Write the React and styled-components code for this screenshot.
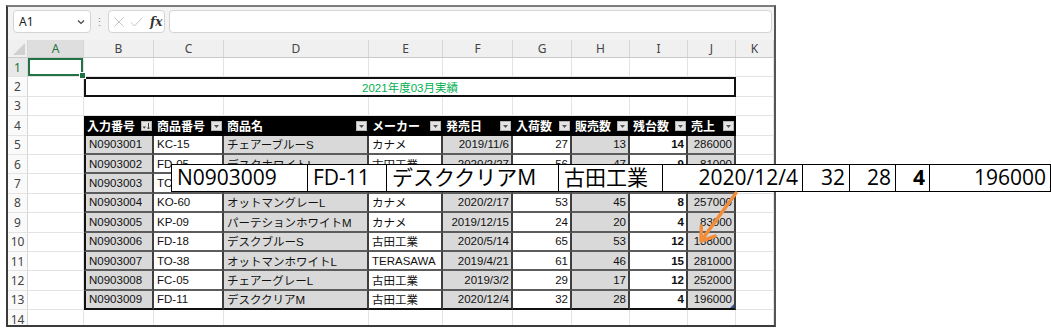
import React from 'react';
import styled, { createGlobalStyle } from 'styled-components';

const Global = createGlobalStyle`
  html, body { margin: 0; padding: 0; background: #fff; }
  body { font-family: "Liberation Sans", "Noto Sans CJK JP", sans-serif; }
`;

const Page = styled.div`
  position: relative;
  width: 1051px;
  height: 331px;
  padding: 5px 0 0 6px;
  box-sizing: border-box;
  overflow: hidden;
`;

const Window = styled.div`
  width: 770px;
  height: 322px;
  box-sizing: border-box;
  border: 2px solid #3b3b3b;
  border-top-color: #7c7c7c;
  border-right-color: #555;
  background: #fff;
  display: flex;
  flex-direction: column;
  overflow: hidden;
`;

const FormulaBar = styled.div`
  height: 33px;
  flex: 0 0 33px;
  box-sizing: border-box;
  background: #f3f3f3;
  display: flex;
  align-items: flex-start;
  padding: 3px 2px 0 5px;
  font-family: "Noto Sans", "Liberation Sans", sans-serif;
`;

const NameBox = styled.div`
  width: 78px;
  height: 23px;
  box-sizing: border-box;
  background: #fff;
  border: 1px solid #d4d4d4;
  border-radius: 4px;
  display: flex;
  align-items: center;
  justify-content: space-between;
  padding: 0 4px 0 5px;
  font-size: 12px;
  color: #222;
`;

const Dots = styled.div`
  width: 17px;
  height: 23px;
  display: flex;
  align-items: center;
  justify-content: center;
  color: #8a8a8a;
  font-size: 11px;
`;

const FnBox = styled.div`
  width: 57px;
  height: 23px;
  box-sizing: border-box;
  background: #fff;
  border: 1px solid #d4d4d4;
  border-radius: 4px;
  display: flex;
  align-items: center;
  gap: 5px;
  padding-left: 4px;
`;

const Fx = styled.span`
  font-family: "DejaVu Serif", "Liberation Serif", serif;
  font-style: italic;
  font-weight: 700;
  font-size: 12px;
  color: #333;
  margin-left: 2px;
`;

const FormulaInput = styled.div`
  flex: 1;
  height: 23px;
  margin-left: 4px;
  box-sizing: border-box;
  background: #fff;
  border: 1px solid #d4d4d4;
  border-radius: 4px;
`;

const Sheet = styled.div`
  position: relative;
  display: grid;
  grid-template-columns: 20px 56px 70px 70px 145px 74px 70px 59px 58px 58px 48px 1fr;
  grid-template-rows: 18px repeat(14, 19.4px);
  font-family: "Liberation Sans", "Noto Sans CJK JP", sans-serif;
`;

const Corner = styled.div`
  background: #f0f0f0;
  border-right: 1px solid #d6d6d6;
  border-bottom: 1px solid #c9c9c9;
  box-sizing: border-box;
  display: flex;
  align-items: flex-end;
  justify-content: flex-end;
  padding: 0 2px 2px 0;
`;

const ColHead = styled.div`
  box-sizing: border-box;
  background: ${p => (p.$active ? '#dedede' : '#f0f0f0')};
  border-right: 1px solid #d6d6d6;
  border-bottom: 1px solid #c9c9c9;
  display: flex;
  align-items: center;
  justify-content: center;
  font-family: "Noto Sans", "Liberation Sans", sans-serif;
  font-size: 12px;
  color: ${p => (p.$active ? '#217346' : '#444')};
`;

const RowHead = styled.div`
  box-sizing: border-box;
  background: ${p => (p.$active ? '#e8e8e8' : '#fafafa')};
  border-right: 1px solid #d6d6d6;
  border-bottom: 1px solid #e4e4e4;
  display: flex;
  align-items: center;
  justify-content: center;
  font-family: "Noto Sans", "Liberation Sans", sans-serif;
  font-size: 12px;
  color: ${p => (p.$active ? '#217346' : '#444')};
`;

const Cell = styled.div`
  position: relative;
  box-sizing: border-box;
  border-right: 1px solid #e3e3e3;
  border-bottom: 1px solid #e3e3e3;
  box-shadow: ${p => (p.$selected ? 'inset 0 0 0 2px #217346' : 'none')};
`;

const Handle = styled.span`
  position: absolute;
  right: -3px;
  bottom: -3px;
  width: 5px;
  height: 5px;
  background: #217346;
  border: 1px solid #fff;
  z-index: 2;
`;

const Title = styled.div`
  grid-column: span 9;
  box-sizing: border-box;
  border: 2px solid #111;
  display: flex;
  align-items: center;
  justify-content: center;
  font-size: 11.5px;
  color: #00b050;
`;

const THead = styled.div`
  box-sizing: border-box;
  background: #000;
  color: #fff;
  font-weight: 700;
  font-size: 12px;
  display: flex;
  align-items: center;
  padding: 0 2px 0 3px;
  white-space: nowrap;
  overflow: hidden;
`;

const FilterBtn = styled.span`
  margin-left: auto;
  width: 11px;
  height: 10px;
  flex: 0 0 11px;
  box-sizing: border-box;
  background: #e4e4e4;
  border: 1px solid #b5b5b5;
  display: flex;
  align-items: center;
  justify-content: center;
`;

const TCell = styled.div`
  position: relative;
  box-sizing: border-box;
  display: flex;
  align-items: center;
  justify-content: ${p => (p.$right ? 'flex-end' : 'flex-start')};
  padding: 0 2px 0 3px;
  background: ${p => (p.$shade ? '#d9d9d9' : '#fff')};
  border-right: 2px solid #3f3f3f;
  border-bottom: 2px solid ${p => (p.$last ? '#111' : '#5c5c5c')};
  border-left: ${p => (p.$first ? '2px solid #111' : 'none')};
  font-size: 11.5px;
  font-weight: ${p => (p.$bold ? 700 : 400)};
  color: #111;
  white-space: nowrap;
  overflow: hidden;
`;

const ResizeMark = styled.span`
  position: absolute;
  right: 0;
  bottom: 0;
  width: 0;
  height: 0;
  border-left: 4px solid transparent;
  border-bottom: 4px solid #2f5597;
`;

const Callout = styled.div`
  position: absolute;
  left: 171px;
  top: 164px;
  width: 880px;
  height: 28px;
  box-sizing: border-box;
  border: 1px solid #000;
  background: #fff;
  display: flex;
  z-index: 5;
`;

const CalloutCell = styled.div`
  flex: ${p => (p.$w ? `0 0 ${p.$w}px` : '1')};
  box-sizing: border-box;
  border-right: ${p => (p.$w ? '1px solid #000' : 'none')};
  display: flex;
  align-items: center;
  justify-content: ${p => (p.$right ? 'flex-end' : 'flex-start')};
  padding: 0 4px 1px 5px;
  font-family: "Open Sans", "Noto Sans CJK JP", sans-serif;
  font-size: 21px;
  font-weight: ${p => (p.$bold ? 700 : 400)};
  color: #000;
  white-space: nowrap;
  line-height: 1;
`;

const Arrow = styled.svg`
  position: absolute;
  left: 695px;
  top: 188px;
  z-index: 6;
  overflow: visible;
`;

const COLS = ['A', 'B', 'C', 'D', 'E', 'F', 'G', 'H', 'I', 'J', 'K'];
const HEADERS = ['入力番号', '商品番号', '商品名', 'メーカー', '発売日', '入荷数', '販売数', '残台数', '売上'];
const DATA = [
  ['N0903001', 'KC-15', 'チェアーブルーS', 'カナメ', '2019/11/6', 27, 13, 14, 286000],
  ['N0903002', 'FD-05', 'デスクホワイトL', '古田工業', '2020/2/27', 56, 47, 9, 81000],
  ['N0903003', 'TC-20', 'チェアーホワイトM', 'TERASAWA', '2019/8/30', 40, 35, 5, 175000],
  ['N0903004', 'KO-60', 'オットマングレーL', 'カナメ', '2020/2/17', 53, 45, 8, 257000],
  ['N0903005', 'KP-09', 'パーテションホワイトM', 'カナメ', '2019/12/15', 24, 20, 4, 83000],
  ['N0903006', 'FD-18', 'デスクブルーS', '古田工業', '2020/5/14', 65, 53, 12, 138000],
  ['N0903007', 'TO-38', 'オットマンホワイトL', 'TERASAWA', '2019/4/21', 61, 46, 15, 281000],
  ['N0903008', 'FC-05', 'チェアーグレーL', '古田工業', '2019/3/2', 29, 17, 12, 252000],
  ['N0903009', 'FD-11', 'デスククリアM', '古田工業', '2020/12/4', 32, 28, 4, 196000],
];
const CALLOUT = [
  { t: 'N0903009', w: 136 },
  { t: 'FD-11', w: 79 },
  { t: 'デスククリアM', w: 172 },
  { t: '古田工業', w: 104 },
  { t: '2020/12/4', w: 140, right: true },
  { t: '32', w: 47, right: true },
  { t: '28', w: 46, right: true },
  { t: '4', w: 34, right: true, bold: true },
  { t: '196000', right: true },
];

const DropIcon = ({ sort }) => (
  <svg width="9" height="8" viewBox="0 0 9 8">
    {sort ? (
      <>
        <path d="M0.5 4.5 L4 4.5 L2.25 6.8 Z" fill="#444" />
        <path d="M6.5 1 L6.5 7 M5.2 5.6 L6.5 7 L7.8 5.6" stroke="#444" strokeWidth="1" fill="none" />
      </>
    ) : (
      <path d="M2 3 L7 3 L4.5 6 Z" fill="#555" />
    )}
  </svg>
);

function TableHeader() {
  return HEADERS.map((h, i) => (
    <THead key={h}>
      {h}
      <FilterBtn>
        <DropIcon sort={i === 0} />
      </FilterBtn>
    </THead>
  ));
}

function DataRow({ row, last }) {
  return row.map((v, i) => (
    <TCell
      key={i}
      $shade={i % 2 === 0}
      $right={i >= 4}
      $bold={i === 7}
      $first={i === 0}
      $last={last}
    >
      {v}
      {last && i === 8 && <ResizeMark />}
    </TCell>
  ));
}

export default function App() {
  const rows = [];
  for (let r = 1; r <= 14; r++) {
    rows.push(
      <RowHead key={`rh${r}`} $active={r === 1}>
        {r}
      </RowHead>
    );
    if (r === 1) {
      rows.push(
        <Cell key="a1" $selected>
          <Handle />
        </Cell>
      );
      COLS.slice(1).forEach(c => rows.push(<Cell key={`${c}${r}`} />));
    } else if (r === 2) {
      rows.push(<Cell key="a2" />);
      rows.push(<Title key="title">2021年度03月実績</Title>);
      rows.push(<Cell key="k2" />);
    } else if (r === 4) {
      rows.push(<Cell key="a4" />);
      rows.push(<TableHeader key="th" />);
      rows.push(<Cell key="k4" />);
    } else if (r >= 5 && r <= 13) {
      rows.push(<Cell key={`a${r}`} />);
      rows.push(<DataRow key={`d${r}`} row={DATA[r - 5]} last={r === 13} />);
      rows.push(<Cell key={`k${r}`} />);
    } else {
      COLS.forEach(c => rows.push(<Cell key={`${c}${r}`} />));
    }
  }

  return (
    <Page>
      <Global />
      <Window>
        <FormulaBar>
          <NameBox>
            <span>A1</span>
            <svg width="10" height="10" viewBox="0 0 10 10">
              <path d="M2 3.5 L5 6.5 L8 3.5" stroke="#444" strokeWidth="1.2" fill="none" />
            </svg>
          </NameBox>
          <Dots>⋮</Dots>
          <FnBox>
            <svg width="12" height="12" viewBox="0 0 12 12">
              <path d="M1.5 1.5 L10.5 10.5 M10.5 1.5 L1.5 10.5" stroke="#c4c4c4" strokeWidth="1" />
            </svg>
            <svg width="13" height="12" viewBox="0 0 13 12">
              <path d="M1 6.5 L4.5 10 L12 2" stroke="#c4c4c4" strokeWidth="1" fill="none" />
            </svg>
            <Fx>fx</Fx>
          </FnBox>
          <FormulaInput />
        </FormulaBar>
        <Sheet>
          <Corner>
            <svg width="12" height="12" viewBox="0 0 12 12">
              <path d="M12 0 L12 12 L0 12 Z" fill="#d0d0d0" />
            </svg>
          </Corner>
          {COLS.map(c => (
            <ColHead key={c} $active={c === 'A'}>
              {c}
            </ColHead>
          ))}
          {rows}
        </Sheet>
      </Window>
      <Callout>
        {CALLOUT.map((c, i) => (
          <CalloutCell key={i} $w={c.w} $right={c.right} $bold={c.bold}>
            {c.t}
          </CalloutCell>
        ))}
      </Callout>
      <Arrow width="50" height="60" viewBox="0 0 50 60">
        <path
          d="M41 5 L6 53 M6.3 38 L6 53 L20.2 48.1"
          stroke="#f28c38"
          strokeWidth="3.5"
          strokeLinecap="round"
          strokeLinejoin="round"
          fill="none"
        />
      </Arrow>
    </Page>
  );
}
